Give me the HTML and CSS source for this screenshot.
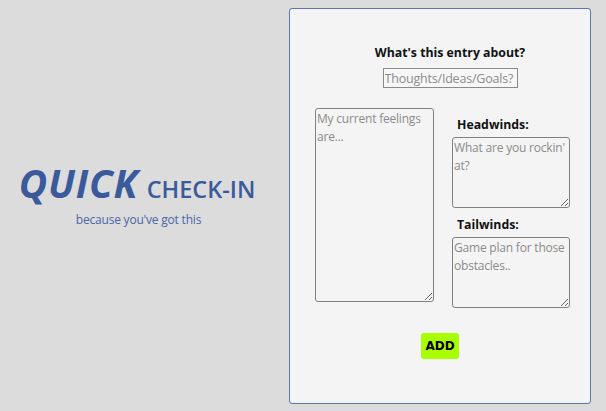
FILE: index.html
```html
<!DOCTYPE html>
<html>
<head>
<meta charset="utf-8">
<link rel="stylesheet" href="styles.css">
</head>
<body>
  <section class="intro">
    <h1 class="title"><span class="quick">QUICK</span> <span class="checkin">CHECK-IN</span></h1>
    <p class="tagline">because you've got this</p>
  </section>
  <form class="card">
    <div class="topic">
      <label class="label" for="topic">What's this entry about?</label>
      <input class="topic-input" id="topic" type="text" placeholder="Thoughts/Ideas/Goals?">
    </div>
    <div class="fields">
      <textarea class="feelings" placeholder="My current feelings are..."></textarea>
      <div class="winds">
        <label class="label wind-label">Headwinds:</label>
        <textarea class="wind" placeholder="What are you rockin' at?"></textarea>
        <label class="label wind-label">Tailwinds:</label>
        <textarea class="wind" placeholder="Game plan for those obstacles.."></textarea>
      </div>
    </div>
    <div class="actions">
      <button class="add" type="button">ADD</button>
    </div>
  </form>
</body>
</html>
```
FILE: styles.css
```css
html, body {
  margin: 0;
  padding: 0;
}
body {
  margin: 8px;
  height: 396px;
  background: #dcdcdc;
  font-family: "Open Sans", "Noto Sans", sans-serif;
  display: flex;
}
.intro {
  width: 281px;
  display: flex;
  flex-direction: column;
  align-items: center;
  justify-content: center;
  padding: 0 23px 22px 0;
  box-sizing: border-box;
}
.title {
  margin: 0;
  color: #3b5a9b;
  line-height: 1;
  white-space: nowrap;
}
.quick {
  font-size: 39px;
  font-style: italic;
  font-weight: 700;
  letter-spacing: 0.8px;
}
.checkin {
  font-size: 23.5px;
  font-weight: 600;
}
.tagline {
  margin: 9px 0 0 3px;
  font-size: 12px;
  letter-spacing: -0.2px;
  color: #4a67a6;
}
.card {
  width: 300px;
  border: 1px solid #5b76b1;
  border-radius: 3px;
  background: #f4f4f4;
  box-sizing: content-box;
  display: flex;
  flex-direction: column;
  padding-top: 35px;
}
.topic {
  display: flex;
  flex-direction: column;
  align-items: center;
  padding-left: 20px;
}
.label {
  font-size: 12.3px;
  font-weight: 700;
  color: #111;
}
.topic-input {
  margin-top: 7px;
  width: 135px;
  height: 20px;
  box-sizing: border-box;
  border: 1px solid #8a8a8a;
  border-radius: 0;
  background: #f7f7f7;
  font-family: "Open Sans", "Noto Sans", sans-serif;
  font-size: 12.5px;
  letter-spacing: -0.2px;
  padding: 0 1px;
}
.topic-input::placeholder,
textarea::placeholder {
  color: #8b8b8b;
}
.fields {
  display: flex;
  margin-top: 20px;
  padding-left: 25px;
  gap: 18px;
}
textarea {
  resize: vertical;
  box-sizing: border-box;
  border: 1px solid #808080;
  border-radius: 3px;
  background: #f4f4f4;
  font-family: "Open Sans", "Noto Sans", sans-serif;
  font-size: 12px;
  letter-spacing: -0.2px;
  line-height: 18px;
  padding: 1px;
  margin: 0;
}
.feelings {
  width: 119px;
  height: 194px;
}
.winds {
  display: flex;
  flex-direction: column;
  padding-top: 8px;
}
.wind-label {
  margin-left: 5px;
  line-height: 18px;
  margin-bottom: 3px;
}
.wind-label + .wind + .wind-label {
  margin-top: 8px;
}
.wind {
  width: 118px;
  height: 71px;
}
.actions {
  display: flex;
  justify-content: center;
  margin-top: 25px;
}
.add {
  width: 38px;
  height: 26px;
  border: none;
  border-radius: 3px;
  background: #a8ff00;
  font-family: "DejaVu Sans", sans-serif;
  font-weight: 700;
  font-size: 12px;
  color: #000;
  padding: 0;
}
```
